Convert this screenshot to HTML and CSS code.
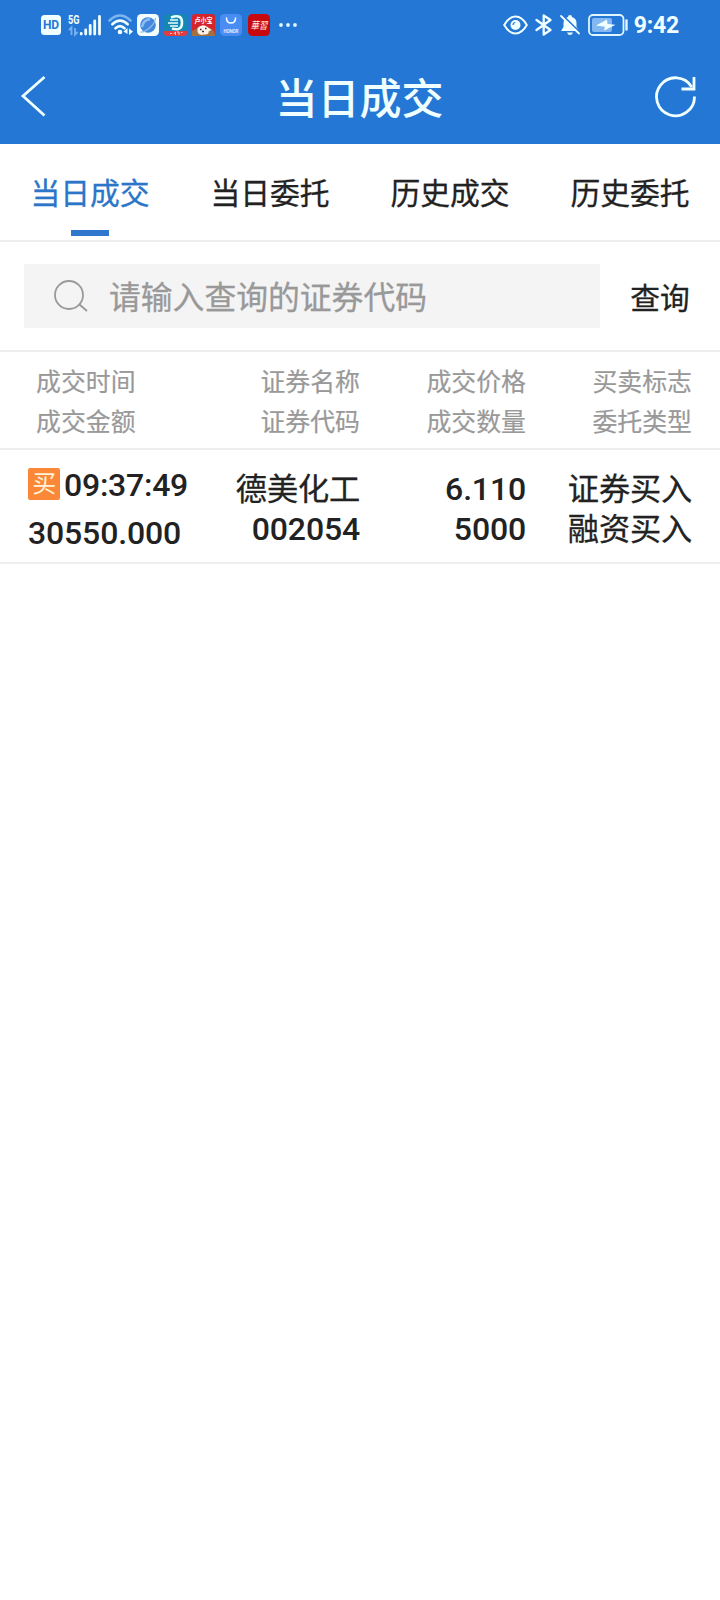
FILE: index.html
```html
<!DOCTYPE html>
<html lang="zh-CN">
<head>
  <meta charset="UTF-8">
  <meta name="viewport" content="width=device-width, initial-scale=1.0">
  <title>当日成交</title>
  <link rel="stylesheet" href="styles.css">
</head>
<body>

  <div class="top">
    <div class="status-bar">
      <div class="status-left">
        <svg class="hd" width="20" height="20" viewBox="0 0 20 20">
          <rect width="20" height="20" rx="3.5" fill="#f0ffff"/>
          <text x="10" y="14.3" text-anchor="middle" textLength="16" font-size="12" font-weight="700" fill="#2577d5">HD</text>
        </svg>
        <svg class="signal" width="34" height="22" viewBox="0 0 34 22">
          <text x="0" y="9.5" font-size="12" font-weight="700" textLength="11.5" lengthAdjust="spacingAndGlyphs" fill="#f0ffff">5G</text>
          <path d="M1 16l2.500-2.500V21M9.500 18L7 20.500V14" fill="none" stroke="#78b2ef" stroke-width="1.8"/>
          <path d="M13.200 19.500v.5M17.700 16v4M22.200 11.500v8.500M26.700 7v13M31.500 2.500v17.500" fill="none" stroke="#f0ffff" stroke-width="2.800" stroke-linecap="round"/>
        </svg>
        <svg class="wifi" width="25" height="21" viewBox="0 0 25 21">
          <path d="M1.500 6.500Q12 -3.500 22.500 6.500" fill="none" stroke="#7db5f0" stroke-width="2.600" stroke-linecap="round"/>
          <path d="M4.300 10.300Q12 3 19.700 10.300M7.500 14.300Q12 10 16.500 14.300" fill="none" stroke="#f0ffff" stroke-width="2.600" stroke-linecap="round"/>
          <circle cx="12" cy="18" r="2.300" fill="#f0ffff"/>
          <path d="M15.500 17.500l4-3.500v6zM25 17.500l-4 3.500V14.500z" fill="#f0ffff"/>
        </svg>
        <svg class="app" width="22" height="22" viewBox="0 0 22 22">
          <rect width="22" height="22" rx="4.500" fill="#f3ffff"/>
          <circle cx="11" cy="11" r="7.800" fill="#4388dc"/>
          <path d="M5 13Q6 6 13 5" fill="none" stroke="#8ebdf0" stroke-width="2.500"/>
          <path d="M3.500 18Q7 18.500 12.500 14T18.500 4" fill="none" stroke="#8fbdf0" stroke-width="1.300"/>
        </svg>
        <svg class="app app-e" width="23" height="22" viewBox="0 0 23 22">
          <rect width="23" height="22" rx="3" fill="#1686b2"/>
          <path d="M7 3.500Q18 -.5 18 8.500T8 14.500" fill="none" stroke="#e8ffff" stroke-width="2.600"/>
          <path d="M6 6h8M4 9h10M6 12h8" stroke="#e8ffff" stroke-width="1.600"/>
          <path d="M0 17h23v2a3 3 0 0 1-3 3H3a3 3 0 0 1-3-3z" fill="#e23b40"/>
          <path d="M6 19.500h2M9.500 20l2-2v3M13 18h2v3M17 18.500h1.500" stroke="#ffc4c0" fill="none"/>
        </svg>
        <svg class="app app-dog" width="23" height="22" viewBox="0 0 23 22">
          <rect width="23" height="22" rx="3" fill="#d5242b"/>
          <path d="M0 22v-5q4-3 8-2l10-1q5 2 5 8z" fill="#a5703d"/>
          <path d="M5.500 14q5-5 10-1l4 3-3 1.500q1 3.500-5 3-5 1-6-3z" fill="#fff4ed"/>
          <path d="M8 15.500h1.500M13 14.500h1.500M10 17.500h2" stroke="#432422" stroke-width="1.300"/>
          <text x="11.500" y="9" text-anchor="middle" font-size="7" font-weight="700" textLength="18" lengthAdjust="spacingAndGlyphs" fill="#fff">卢小宝</text>
        </svg>
        <svg class="app app-honor" width="22" height="22" viewBox="0 0 22 22">
          <rect width="22" height="22" rx="4.500" fill="#498cf4"/>
          <path d="M6.500 4q0 5 4.500 5t4.500-5" fill="none" stroke="#f0ffff" stroke-width="1.500" stroke-linecap="round"/>
          <text x="11" y="19" text-anchor="middle" font-size="4.500" font-weight="700" textLength="15" fill="#dff2ff">HONOR</text>
        </svg>
        <svg class="app app-red" width="22" height="22" viewBox="0 0 22 22">
          <rect width="22" height="22" rx="4.500" fill="#c8080f"/>
          <text x="11" y="15" text-anchor="middle" font-size="10" font-style="italic" textLength="17" lengthAdjust="spacingAndGlyphs" fill="#ffe8e0">華習</text>
        </svg>
        <svg class="dots" width="18" height="4" viewBox="0 0 18 4">
          <circle cx="2" cy="2" r="1.900" fill="#dff5ff"/>
          <circle cx="9" cy="2" r="1.900" fill="#dff5ff"/>
          <circle cx="16" cy="2" r="1.900" fill="#dff5ff"/>
        </svg>
      </div>
      <div class="status-right">
        <svg class="eye" width="25" height="20" viewBox="0 0 25 20">
          <path d="M1.200 10Q6 1.500 12.500 1.500T23.800 10Q19 18.500 12.500 18.500T1.200 10z" fill="none" stroke="#f0ffff" stroke-width="2"/>
          <circle cx="12.500" cy="10" r="5" fill="#f0ffff"/>
          <path d="M10 10q0-2.300 2.300-2.500" fill="none" stroke="#2577d5" stroke-width="1.200"/>
        </svg>
        <svg class="bt" width="17" height="22" viewBox="0 0 17 22">
          <path d="M1.500 6l14 10-6.800 4.500V1.500L15.500 6l-14 10" fill="none" stroke="#f0ffff" stroke-width="2.300" stroke-linejoin="round" stroke-linecap="round"/>
        </svg>
        <svg class="bell" width="20" height="22" viewBox="0 0 20 22">
          <path d="M10 1q2 0 2 2 4.500 1.500 4.500 6v4l2.500 4H1l2.500-4V9Q3.500 4.500 8 3q0-2 2-2zM7 18.500h6q-1 2.500-3 2.500t-3-2.500z" fill="#f0ffff"/>
          <path d="M2 1l18 17.500" stroke="#2577d5" stroke-width="2"/>
          <path d="M1 2l18 17.500" stroke="#f0ffff" stroke-width="1.800" stroke-linecap="round"/>
        </svg>
        <svg class="battery" width="40" height="22" viewBox="0 0 40 22">
          <rect x="1" y="1" width="34.500" height="20" rx="4" fill="none" stroke="#dff5ff" stroke-width="1.800"/>
          <rect x="4" y="4" width="20" height="14" rx="2" fill="#83b8f2"/>
          <path d="M19 5.500L8 11.500l9 1.200-1 4L27.500 10.800l-8-.8z" fill="#f0ffff"/>
          <path d="M38.500 6.500v9" stroke="#dff5ff" stroke-width="2.400" stroke-linecap="round"/>
        </svg>
        <span class="clock">9:42</span>
      </div>
    </div>

    <header>
      <svg class="back" width="26" height="42" viewBox="0 0 26 42">
        <path d="M23.500 2L2 21 23.500 40.500" fill="none" stroke="#f0ffff" stroke-width="2.800"/>
      </svg>
      <h1>当日成交</h1>
      <svg class="refresh" width="42" height="42" viewBox="0 0 42 42">
        <path d="M39.500 21.500A19 19 0 1 1 36.800 12" fill="none" stroke="#f0ffff" stroke-width="2.800"/>
        <path d="M39 2v12H26.500" fill="none" stroke="#f0ffff" stroke-width="2.800"/>
      </svg>
    </header>
  </div>

  <nav>
    <a class="active">当日成交</a>
    <a>当日委托</a>
    <a>历史成交</a>
    <a>历史委托</a>
  </nav>

  <div class="search">
    <div class="search-box">
      <svg width="34" height="32" viewBox="0 0 34 32">
        <circle cx="15" cy="15" r="14" fill="none" stroke="#999" stroke-width="1.800"/>
        <path d="M25.500 24.500l7.500 6.500" stroke="#999" stroke-width="2"/>
      </svg>
      <span>请输入查询的证券代码</span>
    </div>
    <div class="search-btn">查询</div>
  </div>

  <div class="grid table-head">
    <div class="col-first">成交时间<br>成交金额</div>
    <div>证券名称<br>证券代码</div>
    <div>成交价格<br>成交数量</div>
    <div>买卖标志<br>委托类型</div>
  </div>

  <div class="grid table-row">
    <div class="col-first">
      <div class="time"><span class="tag">买</span>09:37:49</div>
      <div>30550.000</div>
    </div>
    <div>
      <div class="cn">德美化工</div>
      <div>002054</div>
    </div>
    <div>6.110<br>5000</div>
    <div class="cn">证券买入<br>融资买入</div>
  </div>

</body>
</html>
```

FILE: styles.css
```css
:root {
  --blue: #2577d5;
  --icon: #f0ffff;
  --line: #eee;
  --text: #222;
  --gray: #999;
}

* {
  box-sizing: border-box;
}

body {
  margin: 0;
  font-family: Roboto, "Noto Sans CJK SC", sans-serif;
  background-color: #fff;
  color: var(--text);
}

svg {
  display: block;
  flex-shrink: 0;
  overflow: visible;
}

.top {
  height: 144px;
  background-color: var(--blue);
  color: var(--icon);
}

.status-bar {
  display: flex;
  justify-content: space-between;
  height: 48px;
  padding: 1px 41px 0;
}

.status-left,
.status-right {
  display: flex;
  align-items: center;
}

.signal {
  margin-left: 7px;
}

.wifi {
  margin-left: 6px;
}

.app {
  margin-left: 4px;
}

.app-e,
.app-dog,
.app-honor {
  margin-left: 5px;
}

.app-red {
  margin-left: 6px;
}

.dots {
  margin-left: 9px;
}

.bt {
  margin-left: 7px;
}

.bell {
  margin-left: 8px;
}

.battery {
  margin-left: 8px;
}

.clock {
  margin-left: 6px;
  padding-top: 2px;
  font-size: 23px;
  font-weight: 700;
  letter-spacing: -0.2px;
  line-height: 48px;
}

header {
  display: flex;
  justify-content: space-between;
  align-items: center;
  height: 96px;
  padding: 0 23px 0 21px;
}

h1 {
  margin: 7px 0 0 17px;
  font-size: 42px;
  font-weight: 500;
  line-height: 60px;
}

nav {
  display: flex;
  height: 98px;
  border-bottom: 2px solid var(--line);
}

nav a {
  display: flex;
  flex: 1;
  flex-direction: column;
  align-items: center;
  font-size: 29.8px;
  line-height: 100px;
  -webkit-text-stroke: 0.3px;
}

nav .active {
  color: #2b76c8;
}

nav .active::after {
  content: "";
  width: 38px;
  height: 6px;
  margin-top: -14px;
  background-color: #2f76cc;
}

.search {
  display: flex;
  align-items: center;
  height: 110px;
  padding-left: 24px;
  border-bottom: 2px solid var(--line);
}

.search-box {
  display: flex;
  align-items: center;
  width: 576px;
  height: 64px;
  padding-left: 30px;
  background-color: #f4f4f4;
  color: var(--gray);
  font-size: 31.8px;
  -webkit-text-stroke: 0.3px;
}

.search-box span {
  margin: -2px 0 0 21px;
}

.search-btn {
  flex: 1;
  text-align: center;
  font-size: 29.7px;
  -webkit-text-stroke: 0.3px;
}

.grid {
  display: grid;
  grid-template-columns: 200px 160px 166px 166px;
  padding-right: 28px;
  text-align: right;
  line-height: 40px;
  border-bottom: 2px solid var(--line);
}

.col-first {
  text-align: left;
}

.table-head {
  height: 98px;
  padding-top: 11px;
  color: var(--gray);
  font-size: 24.9px;
  -webkit-text-stroke: 0.2px;
}

.table-head .col-first {
  padding-left: 36px;
}

.table-row {
  height: 114px;
  padding-top: 19px;
  font-size: 32px;
  font-weight: 500;
  letter-spacing: -0.15px;
}

.table-row .col-first {
  margin-top: -8px;
  padding-left: 28px;
  line-height: 48px;
}

.table-row .cn {
  padding-top: 1px;
  font-size: 31.2px;
  font-weight: 400;
  -webkit-text-stroke: 0.3px;
}

.table-row div.cn:first-child {
  height: 40px;
}

.time {
  display: flex;
  align-items: center;
  letter-spacing: -0.25px;
}

.tag {
  width: 32px;
  height: 32px;
  margin: -2px 4px 0 0;
  border-radius: 2px;
  background-color: #fb8739;
  color: #fff3d8;
  font-size: 24px;
  font-weight: 400;
  line-height: 32px;
  text-align: center;
}
```
